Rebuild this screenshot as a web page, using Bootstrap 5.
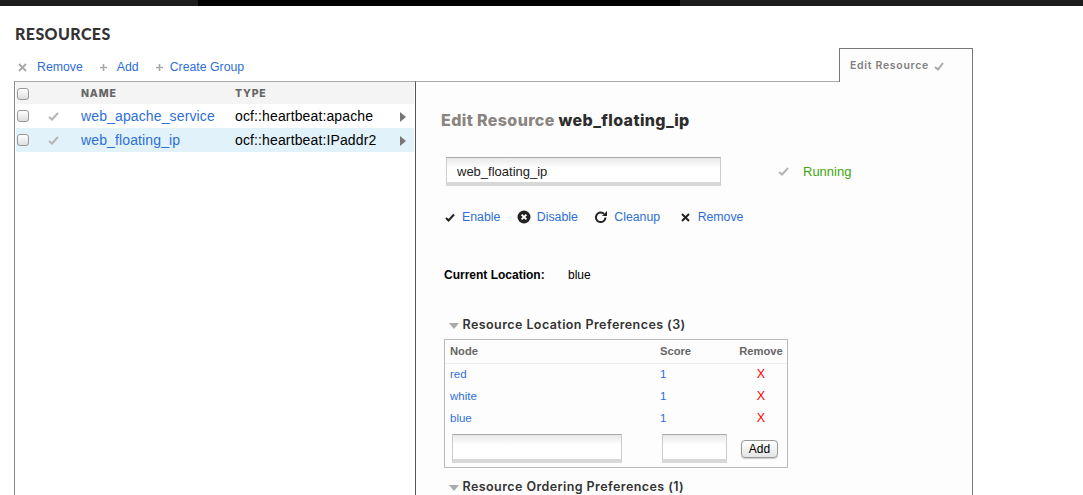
<!DOCTYPE html>
<html lang="en">
<head>
  <meta charset="UTF-8">
  <meta name="viewport" content="width=device-width, initial-scale=1.0">
  <title>Resources</title>
  <link href="https://cdn.jsdelivr.net/npm/bootstrap@5.3.0/dist/css/bootstrap.min.css" rel="stylesheet">
  <style>
    html, body { height: 495px; overflow: hidden; }
    body { background: #fff; font-family: "Liberation Sans", Arial, sans-serif; font-size: 13px; color: #000; }
    a { color: #2e6fd8; text-decoration: none; }
    .top-strip { height: 6px; background: #000; display: flex; }
    .top-strip span { background: #1c1c1c; }
    .top-strip .edge { width: 198px; }
    .top-strip .mid { width: 482px; background: #000; }
    .top-strip .rest { flex: 1; }
    .page-wrap { width: 959px; margin-left: 14px; }
    .page-title { font-family: Lato, sans-serif; font-weight: 900; font-size: 16px; letter-spacing: .4px; color: #333; margin: 0; padding: 18px 0 0 1px; line-height: 19px; height: 42px; }
    .action-row { height: 33px; }
    .action-list { padding: 12px 0 0 4px; gap: 16px; font-size: 12.3px; line-height: 15px; }
    .action-list a { margin-left: 9px; }
    .action-list a.wide-gap { margin-left: 10px; }
    .action-list a.tight-gap { margin-left: 6px; }
    .edit-tab { width: 134px; height: 34px; margin-bottom: -1px; background: #fdfdfd; border: 1px solid #777; border-bottom: 0; position: relative; z-index: 1; padding: 10px 0 0 10px; font-family: Inter, sans-serif; font-weight: 600; font-size: 10.5px; letter-spacing: .7px; color: #808080; line-height: 14px; }
    .tab-mark { margin-left: 2px; }
    .panes { height: 414px; }
    .left-pane { width: 402px; border-top: 1px solid #aaa; border-left: 1px solid #888; border-right: 1px solid #555; padding: 0 0 0 1px; flex: none; }
    .res-table { width: 398px; table-layout: fixed; border-collapse: collapse; font-size: 14px; letter-spacing: .13px; }
    .res-table th { height: 22px; padding: 2px 0 0; background: #f4f4f4; font-family: Inter, sans-serif; font-weight: 800; font-size: 10.5px; letter-spacing: .8px; color: #666; }
    .res-table td { height: 24px; padding: 0; }
    .res-table tr.picked td { background: #e1f2fb; }
    .fake-check { display: block; width: 12px; height: 12px; margin-left: 1px; border: 1px solid #999; border-radius: 3px; background: linear-gradient(#fff, #ddd); }
    .mark-cell svg { margin-left: 2px; }
    .right-pane { width: 557px; background: #fdfdfd; border-top: 1px solid #aaa; border-right: 1px solid #777; padding: 0 0 0 25px; }
    .edit-title { font-family: Inter, sans-serif; font-weight: 800; font-size: 16px; letter-spacing: .38px; margin: 0; padding-top: 28px; line-height: 20px; color: #8a8580; }
    .edit-title b { color: #2d2d2d; font-weight: 800; }
    .name-row { margin: 27px 0 0 5px; height: 29px; }
    .sunk-input { display: block; border: 1px solid #ccc; border-bottom: 4px solid #d8d8d8; border-top-color: #aaa; border-radius: 0; background: linear-gradient(#e8e8e8, #fff 10px); padding: 2px 10px 0; font-family: "Liberation Sans", Arial, sans-serif; font-size: 13px; color: #222; }
    .name-input { width: 275px; height: 29px; }
    .run-state { color: #3fa50f; margin-left: 14px; }
    .btn-row { margin: 24px 0 0 4px; gap: 16.5px; font-size: 12.3px; line-height: 15px; }
    .btn-row a { margin-left: 6px; }
    .btn-row a.first-link { margin-left: 7px; }
    .location-row { margin: 43px 0 0 3px; font-size: 12px; line-height: 15px; }
    .location-row b { display: inline-block; width: 124px; }
    .pref-head { font-family: Inter, sans-serif; font-weight: 600; font-size: 12.5px; letter-spacing: .42px; color: #333; line-height: 17px; }
    .pref-head svg { margin: 0 0 0 8px; }
    .pref-box { width: 344px; height: 129px; margin: 6px 0 10px 3px; border: 1px solid #bbb; }
    .pref-table { width: 100%; table-layout: fixed; font-size: 11.5px; }
    .pref-table th { height: 23.5px; padding: 0; font-weight: 700; font-size: 11.2px; color: #666; border-bottom: 1px solid #eee; }
    .pref-table td { height: 22px; padding: 0; }
    .pref-table a { color: #2e6fd8; }
    .x-mark { color: #f00; font-size: 12.5px; }
    .pref-add { padding: 4.5px 0 0 7px; }
    .add-node { width: 170px; height: 29px; }
    .add-score { width: 65px; height: 29px; margin-left: 40px; }
    .add-btn { margin-left: 14px; font-size: 12px; line-height: 15px; padding: 1px 5px; height: 18px; width: 37px; border: 1px solid #999; border-radius: 4px; background: linear-gradient(#fff, #e4e4e4); color: #000; box-shadow: 0 1px 1px #ccc; }
  </style>
</head>
<body>
<div class="top-strip"><span class="edge"></span><span class="mid"></span><span class="rest"></span></div>

<div class="page-wrap">
  <h1 class="page-title">RESOURCES</h1>

  <div class="action-row d-flex justify-content-between align-items-end">
    <div class="action-list d-flex align-self-start">
      <span><svg width="9" height="9" viewBox="0 0 9 9"><path d="M1 1l7 7M8 1l-7 7" stroke="#aaa" stroke-width="2"/></svg><a class="wide-gap" href="#">Remove</a></span>
      <span><svg width="9" height="9" viewBox="0 0 9 9"><path d="M4.5 1v7M1 4.5h7" stroke="#aaa" stroke-width="1.6"/></svg><a href="#">Add</a></span>
      <span><svg width="9" height="9" viewBox="0 0 9 9"><path d="M4.5 1v7M1 4.5h7" stroke="#aaa" stroke-width="1.6"/></svg><a class="tight-gap" href="#">Create Group</a></span>
    </div>
    <div class="edit-tab">Edit Resource <svg class="tab-mark" width="10" height="9" viewBox="0 0 10 9"><path d="M1 5l3 2.5L9 1" fill="none" stroke="#aaa" stroke-width="2"/></svg></div>
  </div>

  <div class="panes d-flex">
    <div class="left-pane">
      <table class="res-table">
        <colgroup><col style="width:30px"><col style="width:35px"><col style="width:154px"><col style="width:165px"><col></colgroup>
        <tr><th><span class="fake-check"></span></th><th></th><th>NAME</th><th>TYPE</th><th></th></tr>
        <tr>
          <td><span class="fake-check"></span></td>
          <td class="mark-cell"><svg width="11" height="9" viewBox="0 0 11 9"><path d="M1 5l3 2.5L10 1" fill="none" stroke="#b5b5b5" stroke-width="2"/></svg></td>
          <td><a href="#">web_apache_service</a></td><td>ocf::heartbeat:apache</td>
          <td><svg width="7" height="10" viewBox="0 0 7 10"><path d="M0 0l6 5-6 5z" fill="#777"/></svg></td>
        </tr>
        <tr class="picked">
          <td><span class="fake-check"></span></td>
          <td class="mark-cell"><svg width="11" height="9" viewBox="0 0 11 9"><path d="M1 5l3 2.5L10 1" fill="none" stroke="#b5b5b5" stroke-width="2"/></svg></td>
          <td><a href="#">web_floating_ip</a></td><td>ocf::heartbeat:IPaddr2</td>
          <td><svg width="7" height="10" viewBox="0 0 7 10"><path d="M0 0l6 5-6 5z" fill="#777"/></svg></td>
        </tr>
      </table>
    </div>

    <div class="right-pane">
      <h2 class="edit-title">Edit Resource <b>web_floating_ip</b></h2>

      <div class="name-row d-flex align-items-center">
        <input class="sunk-input name-input" type="text" value="web_floating_ip">
        <svg style="margin-left:57px" width="11" height="9" viewBox="0 0 11 9"><path d="M1 5l3 2.5L10 1" fill="none" stroke="#b5b5b5" stroke-width="2"/></svg>
        <span class="run-state">Running</span>
      </div>

      <div class="btn-row d-flex align-items-center">
        <span><svg width="10" height="9" viewBox="0 0 10 9"><path d="M1 5l2.5 2.5L9 1.5" fill="none" stroke="#222" stroke-width="2"/></svg><a class="first-link" href="#">Enable</a></span>
        <span><svg width="14" height="14" viewBox="0 0 14 14" class="align-text-bottom"><circle cx="7" cy="7" r="6.5" fill="#222"/><path d="M4.6 4.6l4.8 4.8M9.4 4.6l-4.8 4.8" stroke="#fff" stroke-width="2"/></svg><a href="#">Disable</a></span>
        <span><svg width="14" height="14" viewBox="0 0 14 14" class="align-text-bottom"><path d="M11.5 7.5a4.8 4.8 0 1 1-1.5-3.7" fill="none" stroke="#222" stroke-width="2"/><path d="M13 1v5H8z" fill="#222"/></svg><a href="#">Cleanup</a></span>
        <span class="ms-1"><svg width="9" height="9" viewBox="0 0 9 9"><path d="M1 1l7 7M8 1l-7 7" stroke="#222" stroke-width="2"/></svg><a class="ms-2" href="#">Remove</a></span>
      </div>

      <div class="location-row"><b>Current Location:</b>blue</div>

      <div class="pref-head" style="margin-top:33px"><svg width="10" height="6" viewBox="0 0 10 6"><path d="M0 0h10L5 6z" fill="#aaa"/></svg> Resource Location Preferences (3)</div>
      <div class="pref-box">
        <table class="pref-table">
          <colgroup><col style="width:5px"><col style="width:210px"><col style="width:75px"><col></colgroup>
          <tr><th></th><th>Node</th><th>Score</th><th class="text-center">Remove</th></tr>
          <tr><td></td><td><a href="#">red</a></td><td><a href="#">1</a></td><td class="text-center x-mark">X</td></tr>
          <tr><td></td><td><a href="#">white</a></td><td><a href="#">1</a></td><td class="text-center x-mark">X</td></tr>
          <tr><td></td><td><a href="#">blue</a></td><td><a href="#">1</a></td><td class="text-center x-mark">X</td></tr>
        </table>
        <div class="pref-add d-flex align-items-center">
          <input class="sunk-input add-node" type="text">
          <input class="sunk-input add-score" type="text">
          <button class="add-btn" type="button">Add</button>
        </div>
      </div>

      <div class="pref-head"><svg width="10" height="6" viewBox="0 0 10 6"><path d="M0 0h10L5 6z" fill="#aaa"/></svg> Resource Ordering Preferences (1)</div>
    </div>
  </div>
</div>
<script src="https://cdn.jsdelivr.net/npm/bootstrap@5.3.0/dist/js/bootstrap.bundle.min.js"></script>
</body>
</html>
